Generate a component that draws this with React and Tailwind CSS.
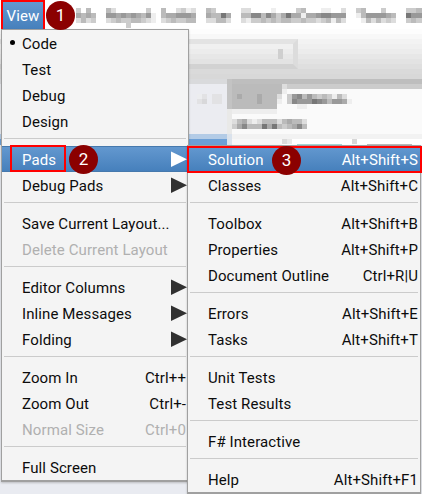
const CELL = 5;

// Every character is a grey level in hex; a dot leaves the cell empty.
function Mosaic({ rows, className }) {
  const cols = Math.max(...rows.map((r) => r.length));
  return (
    <svg
      className={`block shrink-0 ${className || ""}`}
      width={cols * CELL}
      height={rows.length * CELL}
      shapeRendering="crispEdges"
      aria-hidden="true"
    >
      {rows.map((row, y) =>
        [...row].map((c, x) =>
          c === "." ? null : (
            <rect key={`${x}-${y}`} x={x * CELL} y={y * CELL} width={CELL} height={CELL} fill={`#${c}${c}${c}`} />
          )
        )
      )}
    </svg>
  );
}

const menuBar = [
  { gap: "", rows: ["c.b.", "abab", "dbdc"] },
  { gap: "ml-[10px]", rows: ["bd......c.", "99a9a9ab9e", "dcbccbbcde", "....c....."] },
  { gap: "ml-[5px]", rows: ["b..dced", "baa999a", "dcbccbb"] },
  { gap: "ml-[10px]", rows: ["bc...", "abb7a", "ddbbd"] },
  { gap: "ml-[10px]", rows: ["dd....e....cb...ee..d", "bb88b8aca7aaeaa988999", "deccbcbcbbccbccdcbebd"] },
  { gap: "ml-[10px]", rows: ["cb...c..", "eb9999ab", ".ebdbdcd"] },
  { gap: "ml-[10px]", rows: ["ccbb", "7999", "cbcc"] },
];

const viewItems = [
  { label: "Code", checked: true },
  { label: "Test" },
  { label: "Debug" },
  { label: "Design" },
  null,
  { label: "Pads", arrow: true, active: true },
  { label: "Debug Pads", arrow: true },
  null,
  { label: "Save Current Layout..." },
  { label: "Delete Current Layout", disabled: true },
  null,
  { label: "Editor Columns", arrow: true },
  { label: "Inline Messages", arrow: true },
  { label: "Folding", arrow: true },
  null,
  { label: "Zoom In", keys: "Ctrl++" },
  { label: "Zoom Out", keys: "Ctrl+-" },
  { label: "Normal Size", keys: "Ctrl+0", disabled: true },
  null,
  { label: "Full Screen" },
];

const padItems = [
  { label: "Solution", keys: "Alt+Shift+S", active: true },
  { label: "Classes", keys: "Alt+Shift+C" },
  null,
  { label: "Toolbox", keys: "Alt+Shift+B" },
  { label: "Properties", keys: "Alt+Shift+P" },
  { label: "Document Outline", keys: "Ctrl+R|U" },
  null,
  { label: "Errors", keys: "Alt+Shift+E" },
  { label: "Tasks", keys: "Alt+Shift+T" },
  null,
  { label: "Unit Tests" },
  { label: "Test Results" },
  null,
  { label: "F# Interactive" },
  null,
  { label: "Help", keys: "Alt+Shift+F1" },
];

function MenuRow({ item }) {
  if (!item) {
    return (
      <div className="h-3 px-[2px] pt-1">
        <div className="h-px bg-[#cbcbcb]" />
      </div>
    );
  }
  const tone = item.active
    ? "border-y border-[#4679ad] bg-linear-to-b from-[#6398cf] to-[#4680bc] text-white"
    : item.disabled
      ? "border-y border-transparent text-[#b0b0b0]"
      : "border-y border-transparent text-[#0c0c0c]";
  return (
    <div className={`flex h-[26px] items-center ${tone}`}>
      <span className="flex w-5 shrink-0 justify-center">
        {item.checked && <span className="mb-[1px] ml-[1px] size-[5px] rounded-full bg-black" />}
      </span>
      <span className="flex-1 pt-[2px]">{item.label}</span>
      {item.keys && <span className="mr-[2px] pt-[2px]">{item.keys}</span>}
      {item.arrow && (
        <svg width="16" height="16" viewBox="0 0 16 16" className={`mr-[1px] ${item.active ? "fill-white" : "fill-[#303030]"}`}>
          <path d="M0 0.5 L16 8.2 L0 16 Z" />
        </svg>
      )}
    </div>
  );
}

function Menu({ items, className }) {
  return (
    <div className={`absolute border border-b-2 border-[#a0a0a0] bg-[#f4f4f4] shadow-[0_1px_2px_rgba(0,0,0,0.2)] ${className}`}>
      {items.map((item, i) => (
        <MenuRow key={i} item={item} />
      ))}
    </div>
  );
}

function Badge({ n, className }) {
  return (
    <div className={`absolute flex size-[29px] items-center justify-center rounded-full bg-[#8b0000] text-[17px] leading-none tracking-normal text-white ${className}`}>
      {n}
    </div>
  );
}

export default function App() {
  return (
    <div className="relative flex h-[494px] w-[422px] flex-col overflow-hidden bg-[#e9ebf1] font-[Roboto,sans-serif] text-[15px] leading-5 tracking-[0.1px] whitespace-nowrap">
      <div className="flex h-[29px] shrink-0 bg-white">
        <div className="ml-px flex h-[31px] w-11 shrink-0 items-center justify-center border-2 border-[#ff0000] bg-linear-to-b from-[#6398cf] to-[#4680bc] text-white">
          View
        </div>
        <div className="ml-[31px] flex pt-2">
          {menuBar.map((m, i) => (
            <Mosaic key={i} rows={m.rows} className={m.gap} />
          ))}
        </div>
      </div>

      <div className="flex h-[50px] shrink-0 bg-[linear-gradient(#fdfdfd_0_5px,#f8f8f8_5px_10px,#f3f3f3_10px_15px,#f0f0f0_15px_20px,#ececec_20px_25px,#e7e7e7_25px_30px,#e3e3e3_30px_35px,#dfdfdf_35px_40px,#dadada_40px_45px,#d8d8d8_45px_50px)] pt-[10px]">
        <div className="flex h-[30px] w-[298px] justify-end border-[5px] border-l-0 border-t-[#e3e3e3] border-r-[#dcdcdc] border-b-[#d2d2d2] pt-[5px] pr-[10px]">
          <div className="h-[10px] w-[5px] bg-[#cfcfcf]" />
        </div>
      </div>

      <div className="flex h-[66px] shrink-0">
        <div className="flex w-[228px] flex-col items-end bg-[#ebecf1]">
          <div className="h-[5px] w-full bg-[#d9dadc]" />
          <Mosaic rows={["ed.dd.", "dc.dd."]} className="mt-[10px] opacity-60" />
          <div className="mt-[30px] h-[5px] w-full bg-[#b3cbe6]" />
          <div className="h-[6px] w-full bg-[#6c9fd6]" />
        </div>
        <div className="flex w-[5px] flex-col bg-[#e9e9e8]">
          <div className="h-[30px] bg-[#c3c3c3]" />
          <div className="mt-[25px] h-[11px] bg-[#dae2ec]" />
        </div>
        <div className="flex flex-1 flex-col bg-[#fafafa]">
          <div className="h-[5px] shrink-0 bg-[#bebebe]" />
          <div className="flex h-[30px]">
            <Mosaic
              rows={[
                "bbbbbbbbbbdccccccccccccccccccccccccccc",
                "bbbbbbbbbbe",
                "babbbabbbd.c98b9bcbcebd",
                "bbbbbabbbe.c8999789b99ae",
                "bbbbbbbbb....ee",
                "eeeeeeeee",
              ]}
            />
          </div>
          <Mosaic rows={["dbadedbbbdbabbd", "ca8bbb7a7bcba8b"]} className="mt-[5px]" />
          <div className="mt-[5px] h-[5px] shrink-0 bg-[#f2f2f2]" />
          <div className="flex h-[6px] bg-white">
            <div className="h-full w-[50px] bg-[#f7f7f7]" />
            <div className="h-[5px] w-[5px] bg-[#dadada]" />
            <div className="h-[5px] w-[5px] bg-[#e8e8e8]" />
            <div className="ml-[5px] h-px w-[45px] self-end bg-[#a4d8d6]" />
            <div className="ml-[10px] h-[5px] w-[5px] bg-[#d7d7d7]" />
            <div className="ml-[10px] h-px w-[45px] self-end bg-[#bbbbbb]" />
          </div>
        </div>
      </div>

      <Menu items={viewItems} className="top-[29px] left-[1px] w-[188px]" />
      <Menu items={padItems} className="top-[145px] left-[187px] w-[234px]" />
      <div className="absolute top-[145px] left-[10px] h-[27px] w-[56px] border-2 border-[#ff0000]" />
      <div className="absolute top-[146px] left-[187px] h-[27px] w-[235px] border-2 border-[#ff0000]" />
      <Badge n="1" className="top-[1px] left-[46px]" />
      <Badge n="2" className="top-[145px] left-[69px]" />
      <Badge n="3" className="top-[146px] left-[272px]" />
    </div>
  );
}
